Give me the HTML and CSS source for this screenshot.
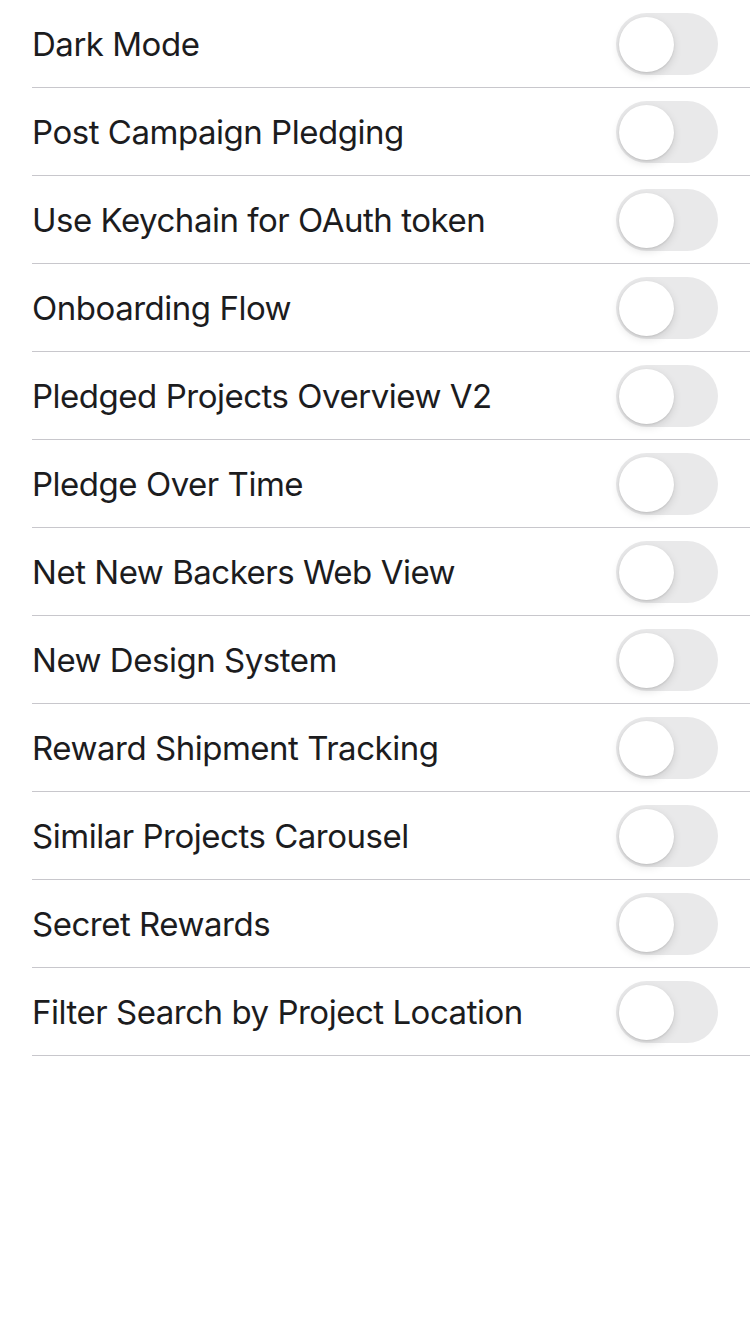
FILE: index.html
```html
<!DOCTYPE html>
<html>
<head>
<meta charset="utf-8">
<link rel="stylesheet" href="styles.css">
</head>
<body>
<ul class="list">
  <li class="row"><span class="label">Dark Mode</span><span class="toggle"><span class="knob"></span></span></li>
  <li class="row"><span class="label">Post Campaign Pledging</span><span class="toggle"><span class="knob"></span></span></li>
  <li class="row"><span class="label">Use Keychain for OAuth token</span><span class="toggle"><span class="knob"></span></span></li>
  <li class="row"><span class="label">Onboarding Flow</span><span class="toggle"><span class="knob"></span></span></li>
  <li class="row"><span class="label">Pledged Projects Overview V2</span><span class="toggle"><span class="knob"></span></span></li>
  <li class="row"><span class="label">Pledge Over Time</span><span class="toggle"><span class="knob"></span></span></li>
  <li class="row"><span class="label">Net New Backers Web View</span><span class="toggle"><span class="knob"></span></span></li>
  <li class="row"><span class="label">New Design System</span><span class="toggle"><span class="knob"></span></span></li>
  <li class="row"><span class="label">Reward Shipment Tracking</span><span class="toggle"><span class="knob"></span></span></li>
  <li class="row"><span class="label">Similar Projects Carousel</span><span class="toggle"><span class="knob"></span></span></li>
  <li class="row"><span class="label">Secret Rewards</span><span class="toggle"><span class="knob"></span></span></li>
  <li class="row"><span class="label">Filter Search by Project Location</span><span class="toggle"><span class="knob"></span></span></li>
</ul>
</body>
</html>
```
FILE: styles.css
```css
html, body {
  margin: 0;
  padding: 0;
  background: #ffffff;
}
body {
  width: 750px;
  height: 1334px;
  font-family: Inter, "Noto Sans", sans-serif;
}
.list {
  list-style: none;
  margin: 0;
  padding: 0 0 0 32px;
}
.row {
  height: 87px;
  display: flex;
  align-items: center;
  justify-content: space-between;
  padding: 0 32px 0 0;
  border-bottom: 1px solid #c8c7cc;
}
.label {
  font-size: 33px;
  color: #1c1c1e;
  letter-spacing: -0.48px;
  line-height: 1;
  padding-top: 2px;
}
.toggle {
  width: 102px;
  height: 62px;
  border-radius: 31px;
  background: #e9e9ea;
  display: flex;
  align-items: center;
  padding: 1px 3px 0;
  box-sizing: border-box;
}
.knob {
  width: 55px;
  height: 55px;
  border-radius: 50%;
  background: #ffffff;
  box-shadow: 0 3px 8px rgba(0,0,0,0.12), 0 1px 2px rgba(0,0,0,0.10);
}
```
